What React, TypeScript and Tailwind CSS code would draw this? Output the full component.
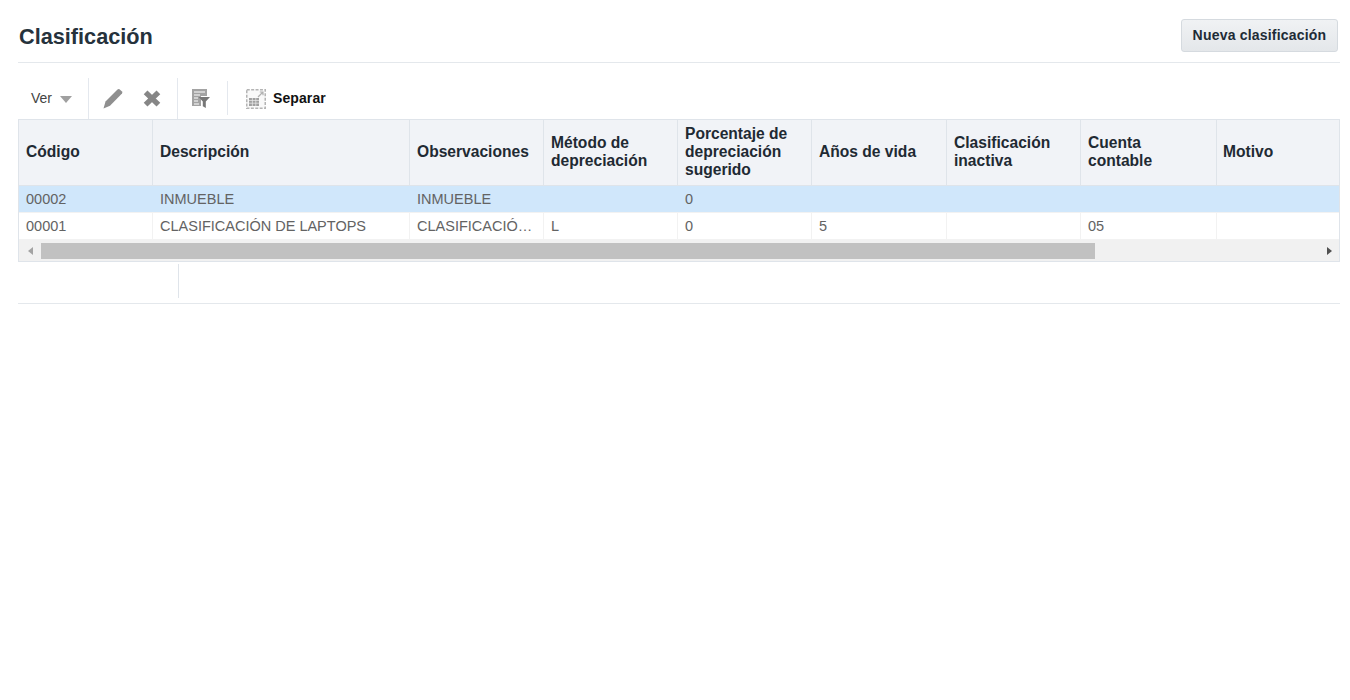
import React from 'react';

const columns = [
  { label: 'Código', width: 'w-[134px]' },
  { label: 'Descripción', width: 'w-[257px]' },
  { label: 'Observaciones', width: 'w-[134px]' },
  { label: 'Método de depreciación', width: 'w-[134px]' },
  { label: 'Porcentaje de depreciación sugerido', width: 'w-[134px]' },
  { label: 'Años de vida', width: 'w-[135px]' },
  { label: 'Clasificación inactiva', width: 'w-[134px]' },
  { label: 'Cuenta contable', width: 'w-[136px]' },
  { label: 'Motivo', width: 'flex-1' },
];

const rows = [
  { selected: true, cells: ['00002', 'INMUEBLE', 'INMUEBLE', '', '0', '', '', '', ''] },
  { selected: false, cells: ['00001', 'CLASIFICACIÓN DE LAPTOPS', 'CLASIFICACIÓ…', 'L', '0', '5', '', '05', ''] },
];

const PencilIcon = () => (
  <svg width="20" height="22" viewBox="0 0 20 22">
    <path d="M0.5 21.5 L2.5 14.5 L14.5 2.5 Q15.5 1.5 16.5 2.2 L19 4.6 Q19.8 5.6 19 6.6 L7 18.8 Z" fill="#8f8f8f" />
  </svg>
);

const CloseIcon = () => (
  <svg width="18" height="17" viewBox="0 0 18 17">
    <path d="M2.6 2.4 L15.4 14.6 M15.4 2.4 L2.6 14.6" stroke="#868686" strokeWidth="5.4" />
  </svg>
);

const FilterIcon = () => (
  <svg width="18" height="19" viewBox="0 0 18 19">
    <path d="M0 0 H15 V7 H9 V17 H0 Z" fill="#a3a3a3" />
    <path d="M2 3 H13 M2 6 H8 M2 9 H6 M2 12 H6 M2 15 H7" stroke="#fff" strokeWidth="1" />
    <path d="M6.5 8 H18 L13.8 12.5 V19 L10.8 17.2 V12.5 Z" fill="#777" />
  </svg>
);

const DetachIcon = () => (
  <svg width="20" height="20" viewBox="0 0 20 20">
    <rect x="0.75" y="0.75" width="18.5" height="18.5" fill="#f9f9f9" stroke="#b4b4b4" strokeWidth="1.5" strokeDasharray="3 1.4" />
    <rect x="3" y="9" width="10" height="8" fill="#a0a0a0" />
    <path d="M3 11.5 H13 M3 14.2 H13 M6.4 9 V17 M9.8 9 V17" stroke="#ececec" strokeWidth="0.7" />
    <path d="M12 8 L17 3 M13.8 3 H17 V6.2" stroke="#b0b0b0" strokeWidth="1.2" fill="none" />
  </svg>
);

export default function App() {
  return (
    <div className="min-h-[700px] bg-white pl-[18px] pr-[10px] font-['Liberation_Sans',Arial,sans-serif]">
      {/* Page header */}
      <div className="flex h-[63px] items-start justify-between border-b border-[#e4e8ec] pr-[2px] pt-[19px]">
        <h1 className="mt-[4px] ml-[1px] text-[21.7px] leading-[28px] font-bold text-[#26323c]">Clasificación</h1>
        <button className="h-[33px] w-[157px] rounded-[3px] border border-[#d5dadf] bg-gradient-to-b from-[#f0f2f4] to-[#e4e7ea] pb-[1px] text-[14px] font-bold tracking-[0.2px] text-[#1d2b36]">
          Nueva clasificación
        </button>
      </div>

      {/* Toolbar */}
      <div className="mt-[15px] flex h-[41px] items-start">
        <div className="flex h-[41px] w-[71px] items-center gap-[8px] border-r border-[#e4e8ee] pl-[13px] pb-[1px] text-[14px] text-[#444]">
          Ver
          <span className="mt-[2px] h-0 w-0 border-x-[6px] border-t-[7px] border-x-transparent border-t-[#a0a0a0]" />
        </div>
        <div className="flex h-[41px] w-[89px] items-center gap-[20px] border-r border-[#e4e8ee] pl-[14px] pb-[1px]">
          <PencilIcon />
          <CloseIcon />
        </div>
        <div className="mt-[3px] flex h-[34px] w-[50px] items-center border-r border-[#e4e8ee] pl-[14px]">
          <FilterIcon />
        </div>
        <div className="flex h-[41px] items-center pl-[18px]">
          <DetachIcon />
          <span className="ml-[7px] text-[14px] font-bold tracking-[0.1px] text-[#111]">Separar</span>
        </div>
      </div>

      {/* Table */}
      <div className="border border-[#dfe4ea] bg-[#f0f0f0]">
        <div className="flex h-[66px] border-b border-[#dfe4ea] bg-[#f1f3f7]">
          {columns.map((col) => (
            <div
              key={col.label}
              className={`${col.width} flex shrink-0 items-center border-r border-[#dfe4ea] px-[7px] pb-[2px] text-[15.6px] leading-[18px] font-bold text-[#1f2a33] last:border-r-0 last:pl-[6px]`}
            >
              <span>{col.label}</span>
            </div>
          ))}
        </div>
        {rows.map((row) => (
          <div
            key={row.cells[0]}
            className={`flex h-[27px] border-b border-[#f2f2f2] ${row.selected ? 'bg-[#d0e7fb]' : 'bg-white'}`}
          >
            {row.cells.map((cell, i) => (
              <div
                key={i}
                className={`${columns[i].width} flex shrink-0 items-center whitespace-nowrap border-r px-[7px] pt-[2px] text-[14.5px] text-[#636363] last:border-r-0 ${row.selected ? 'border-[#d0e7fb]' : 'border-[#f2f2f2]'}`}
              >
                {cell}
              </div>
            ))}
          </div>
        ))}
        {/* Horizontal scrollbar */}
        <div className="flex h-[21px] items-center bg-[#f1f1f1]">
          <span className="ml-[9px] h-0 w-0 border-y-[4px] border-r-[5px] border-y-transparent border-r-[#a3a3a3]" />
          <div className="ml-[8px] h-[16px] w-[1054px] bg-[#c1c1c1]" />
          <span className="ml-auto mr-[7px] h-0 w-0 border-y-[4px] border-l-[5px] border-y-transparent border-l-[#505050]" />
        </div>
      </div>

      {/* Empty detail strip */}
      <div className="flex h-[42px] items-start border-b border-[#e4e8ec]">
        <div className="mt-[2px] h-[34px] w-[161px] border-r border-[#dfe4ea]" />
      </div>
    </div>
  );
}
